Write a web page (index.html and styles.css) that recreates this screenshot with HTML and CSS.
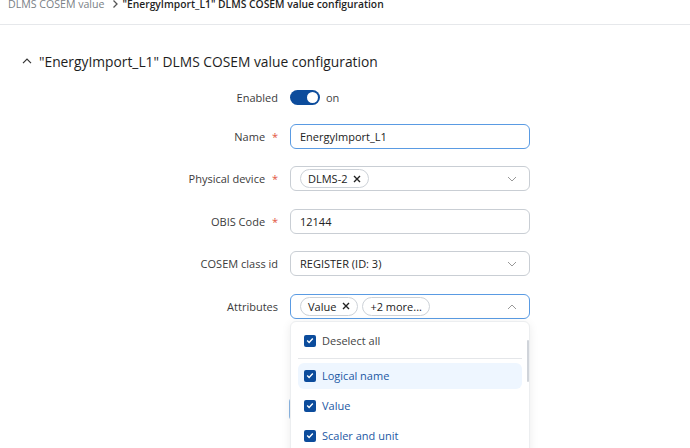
FILE: index.html
```html
<!DOCTYPE html>
<html>
<head>
<meta charset="utf-8">
<link rel="stylesheet" href="styles.css">
</head>
<body>
<header class="crumbs">
  <span class="crumb-text"><span class="crumb-prev">DLMS COSEM value</span><svg class="crumb-sep" width="8" height="10" viewBox="0 0 8 10"><path d="M2.5 1.5 L6 5 L2.5 8.5" fill="none" stroke="#555" stroke-width="1.3"/></svg><span class="crumb-cur">"EnergyImport_L1" DLMS COSEM value configuration</span></span>
</header>
<main class="page">
  <h2 class="section-title"><svg class="caret" width="10" height="6" viewBox="0 0 10 6"><path d="M1 5.2 L5 1.2 L9 5.2" fill="none" stroke="#333" stroke-width="1.2"/></svg>"EnergyImport_L1" DLMS COSEM value configuration</h2>
  <div class="form">
    <div class="row row-toggle">
      <label class="lbl">Enabled</label>
      <div class="field toggle-field"><span class="toggle"><span class="knob"></span></span><span class="toggle-txt">on</span></div>
    </div>
    <div class="row">
      <label class="lbl">Name <span class="req">*</span></label>
      <div class="field"><div class="input focus">EnergyImport_L1</div></div>
    </div>
    <div class="row">
      <label class="lbl">Physical device <span class="req">*</span></label>
      <div class="field"><div class="input select"><span class="chip">DLMS-2 <svg class="x" width="8" height="8" viewBox="0 0 8 8"><path d="M1 1 L7 7 M7 1 L1 7" stroke="#222" stroke-width="1.4"/></svg></span><svg class="chev" width="10" height="6" viewBox="0 0 10 6"><path d="M1 1 L5 5 L9 1" fill="none" stroke="#999" stroke-width="1"/></svg></div></div>
    </div>
    <div class="row">
      <label class="lbl">OBIS Code <span class="req">*</span></label>
      <div class="field"><div class="input">12144</div></div>
    </div>
    <div class="row">
      <label class="lbl">COSEM class id</label>
      <div class="field"><div class="input select">REGISTER (ID: 3)<svg class="chev" width="10" height="6" viewBox="0 0 10 6"><path d="M1 1 L5 5 L9 1" fill="none" stroke="#999" stroke-width="1"/></svg></div></div>
    </div>
    <div class="row">
      <label class="lbl">Attributes</label>
      <div class="field attr-field">
        <div class="input select focus"><span class="chip">Value <svg class="x" width="8" height="8" viewBox="0 0 8 8"><path d="M1 1 L7 7 M7 1 L1 7" stroke="#222" stroke-width="1.4"/></svg></span><span class="chip more">+2 more...</span><svg class="chev" width="10" height="6" viewBox="0 0 10 6"><path d="M1 5 L5 1 L9 5" fill="none" stroke="#999" stroke-width="1"/></svg></div>
        <div class="dropdown">
          <div class="opt all"><span class="cb"><svg width="8" height="7" viewBox="0 0 8 7"><path d="M1.2 3.6 L3.1 5.4 L6.8 1.4" fill="none" stroke="#fff" stroke-width="1.4"/></svg></span>Deselect all</div>
          <div class="divider"></div>
          <div class="opt sel hover"><span class="cb"><svg width="8" height="7" viewBox="0 0 8 7"><path d="M1.2 3.6 L3.1 5.4 L6.8 1.4" fill="none" stroke="#fff" stroke-width="1.4"/></svg></span>Logical name</div>
          <div class="opt sel"><span class="cb"><svg width="8" height="7" viewBox="0 0 8 7"><path d="M1.2 3.6 L3.1 5.4 L6.8 1.4" fill="none" stroke="#fff" stroke-width="1.4"/></svg></span>Value</div>
          <div class="opt sel"><span class="cb"><svg width="8" height="7" viewBox="0 0 8 7"><path d="M1.2 3.6 L3.1 5.4 L6.8 1.4" fill="none" stroke="#fff" stroke-width="1.4"/></svg></span>Scaler and unit</div>
          <div class="scrollbar"></div>
        </div>
      </div>
    </div>
    <div class="row actions">
      <span class="lbl"></span>
      <div class="field"><button class="btn" aria-label="Save"></button></div>
    </div>
  </div>
</main>
</body>
</html>
```
FILE: styles.css
```css
* { box-sizing: border-box; }
html, body { margin: 0; padding: 0; background: #fff; overflow: hidden; }
body { font-family: "Open Sans", "Noto Sans", sans-serif; color: #222; width: 690px; height: 448px; }

.crumbs {
  height: 25px;
  border-bottom: 1px solid #e6e8eb;
  padding: 0 8px;
  overflow: hidden;
}
.crumb-text {
  display: flex;
  align-items: center;
  margin-top: -4px;
  height: 16px;
  font-size: 10.6px;
  white-space: nowrap;
}
.crumb-prev { color: #7a7f86; }
.crumb-sep { margin: 0 4px 0 6px; }
.crumb-cur { color: #1f1f1f; font-weight: 600; font-size: 10.3px; }

.page { padding: 26px 0 0 20px; }
.section-title {
  margin: 0;
  display: flex;
  align-items: center;
  font-size: 13.8px;
  font-weight: 500;
  color: #1e1e1e;
  height: 20px;
}
.caret { margin: 0 7px 0 2px; }

.form {
  margin-top: 19px;
  display: flex;
  flex-direction: column;
  gap: 17.5px;
}
.row {
  display: grid;
  grid-template-columns: 258px 240px;
  column-gap: 12px;
  align-items: center;
  height: 25px;
}
.row-toggle { height: 15px; margin-bottom: 1px; }
.lbl {
  text-align: right;
  font-size: 11px;
  color: #3b3b3b;
  white-space: nowrap;
}
.req { color: #e2553f; margin-left: 4px; }

.field { position: relative; height: 100%; }
.toggle-field { display: flex; align-items: center; gap: 6px; }
.toggle {
  width: 30px; height: 15px; border-radius: 8px;
  background: #0c4c9c;
  display: flex; align-items: center; justify-content: flex-end;
  padding-right: 2px;
}
.knob { width: 11px; height: 11px; border-radius: 50%; background: #fff; }
.toggle-txt { font-size: 11px; color: #444; }

.input {
  height: 25px;
  border: 1px solid #c9ced4;
  border-radius: 6px;
  padding: 0 9px;
  display: flex;
  align-items: center;
  gap: 4px;
  font-size: 11px;
  color: #222;
  background: #fff;
}
.input.focus { border-color: #5a9be3; }
.select { position: relative; }
.chev { position: absolute; right: 12px; top: 9px; }
.chip {
  display: inline-flex; align-items: center;
  height: 19px;
  border: 1px solid #cdd2d8;
  border-radius: 10px;
  padding: 0 7px;
  font-size: 11px;
  color: #222;
}
.x { margin-left: 6px; }

.dropdown {
  position: absolute;
  top: 27px; left: 0;
  width: 240px;
  height: 140px;
  background: #fff;
  border: 1px solid #eceef0;
  border-radius: 6px;
  box-shadow: 0 2px 10px rgba(0,0,0,0.08);
  padding: 2px 7px 0 7px;
  z-index: 2;
}
.opt {
  height: 26px;
  margin: 4px 0;
  display: flex; align-items: center;
  padding-left: 6px;
  font-size: 11px;
  border-radius: 6px;
  color: #444;
}
.opt.sel { color: #1c58a4; }
.opt.hover { background: #eef6ff; }
.cb {
  width: 12px; height: 12px;
  border-radius: 2px;
  background: #0c4c9c;
  display: inline-flex; align-items: center; justify-content: center;
  margin-right: 6px;
}
.divider { height: 1px; background: #e4e6e9; margin: 4px 0; }
.scrollbar {
  position: absolute;
  right: 0; top: 18px;
  width: 2px; height: 42px;
  background: #d0d4da;
  border-radius: 1px;
}

.actions { height: 22px; margin-top: 62px; }
.btn {
  height: 22px; width: 70px;
  border: none;
  border-radius: 4px;
  background: #8bb6e3;
  margin-left: -1px;
}
```
